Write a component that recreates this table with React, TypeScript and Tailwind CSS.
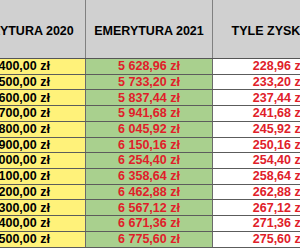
import React from "react";

const rows = [
  ["5 400,00 zł", "5 628,96 zł", "228,96 zł"],
  ["5 500,00 zł", "5 733,20 zł", "233,20 zł"],
  ["5 600,00 zł", "5 837,44 zł", "237,44 zł"],
  ["5 700,00 zł", "5 941,68 zł", "241,68 zł"],
  ["5 800,00 zł", "6 045,92 zł", "245,92 zł"],
  ["5 900,00 zł", "6 150,16 zł", "250,16 zł"],
  ["6 000,00 zł", "6 254,40 zł", "254,40 zł"],
  ["6 100,00 zł", "6 358,64 zł", "258,64 zł"],
  ["6 200,00 zł", "6 462,88 zł", "262,88 zł"],
  ["6 300,00 zł", "6 567,12 zł", "267,12 zł"],
  ["6 400,00 zł", "6 671,36 zł", "271,36 zł"],
  ["6 500,00 zł", "6 775,60 zł", "275,60 zł"],
];

export default function App() {
  return (
    <div
      className="w-[300px] h-[250px] overflow-hidden bg-white"
      style={{ fontFamily: '"Liberation Sans", Arial, sans-serif' }}
    >
      <div className="ml-[-47px] w-[392px] flex flex-col font-bold text-[12.5px] leading-none">
        <div className="flex h-[59px] bg-[#d0d0d0] border-b border-[#555] text-black">
          <div className="w-[133px] shrink-0 flex items-center justify-center border-r border-[#808080] pt-[4px]">
            EMERYTURA 2020
          </div>
          <div className="w-[127px] shrink-0 flex items-center justify-center border-r border-[#808080] pt-[4px]">
            EMERYTURA 2021
          </div>
          <div className="w-[131px] shrink-0 flex items-center justify-center pt-[4px]">
            TYLE ZYSKASZ
          </div>
        </div>
        {rows.map((r, i) => (
          <div key={i} className="flex h-[15.72px] border-b border-[#5c5c5c]">
            <div className="w-[133px] shrink-0 flex items-center justify-center bg-[#fff27a] border-r border-[#6a6a6a] text-black whitespace-nowrap">
              {r[0]}
            </div>
            <div className="w-[127px] shrink-0 flex items-center justify-center bg-[#a9d08e] border-r border-[#6a6a6a] text-[#e0202a] whitespace-nowrap">
              {r[1]}
            </div>
            <div className="w-[131px] shrink-0 flex items-center justify-center bg-white text-[#e0202a] whitespace-nowrap">
              {r[2]}
            </div>
          </div>
        ))}
      </div>
    </div>
  );
}
